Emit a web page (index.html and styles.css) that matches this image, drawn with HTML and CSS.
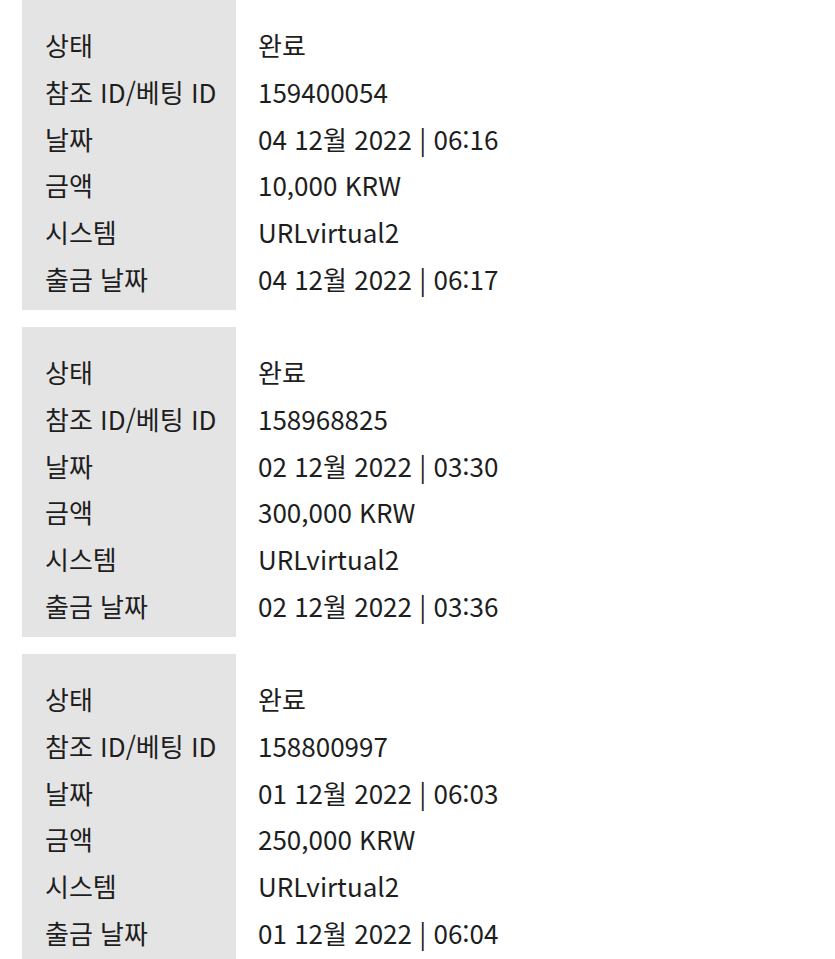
FILE: index.html
```html
<!DOCTYPE html>
<html lang="ko">
<head>
<meta charset="utf-8">
<link rel="stylesheet" href="styles.css">
</head>
<body>
<div class="list">
  <div class="card">
    <div class="labels">
      <div class="row">상태</div>
      <div class="row">참조 ID/베팅 ID</div>
      <div class="row">날짜</div>
      <div class="row">금액</div>
      <div class="row">시스템</div>
      <div class="row">출금 날짜</div>
    </div>
    <div class="values">
      <div class="row">완료</div>
      <div class="row">159400054</div>
      <div class="row">04 12월 2022 | 06:16</div>
      <div class="row">10,000 KRW</div>
      <div class="row">URLvirtual2</div>
      <div class="row">04 12월 2022 | 06:17</div>
    </div>
  </div>
  <div class="card">
    <div class="labels">
      <div class="row">상태</div>
      <div class="row">참조 ID/베팅 ID</div>
      <div class="row">날짜</div>
      <div class="row">금액</div>
      <div class="row">시스템</div>
      <div class="row">출금 날짜</div>
    </div>
    <div class="values">
      <div class="row">완료</div>
      <div class="row">158968825</div>
      <div class="row">02 12월 2022 | 03:30</div>
      <div class="row">300,000 KRW</div>
      <div class="row">URLvirtual2</div>
      <div class="row">02 12월 2022 | 03:36</div>
    </div>
  </div>
  <div class="card">
    <div class="labels">
      <div class="row">상태</div>
      <div class="row">참조 ID/베팅 ID</div>
      <div class="row">날짜</div>
      <div class="row">금액</div>
      <div class="row">시스템</div>
      <div class="row">출금 날짜</div>
    </div>
    <div class="values">
      <div class="row">완료</div>
      <div class="row">158800997</div>
      <div class="row">01 12월 2022 | 06:03</div>
      <div class="row">250,000 KRW</div>
      <div class="row">URLvirtual2</div>
      <div class="row">01 12월 2022 | 06:04</div>
    </div>
  </div>
</div>
</body>
</html>
```

FILE: styles.css
```css
html, body {
  margin: 0;
  padding: 0;
  background: #ffffff;
}
body {
  font-family: "Noto Sans CJK KR", "Noto Sans", sans-serif;
  font-size: 26px;
  color: #1e1e1e;
  overflow: hidden;
}
.list {
  display: flex;
  flex-direction: column;
  gap: 17px;
  padding-left: 22px;
}
.card {
  display: flex;
  height: 310px;
}
.labels {
  width: 214px;
  box-sizing: border-box;
  background: #e4e4e4;
  padding: 22px 0 7px 23px;
}
.values {
  padding: 22px 0 7px 22px;
}
.row {
  height: 46.8px;
  line-height: 46.8px;
  white-space: nowrap;
}
```
